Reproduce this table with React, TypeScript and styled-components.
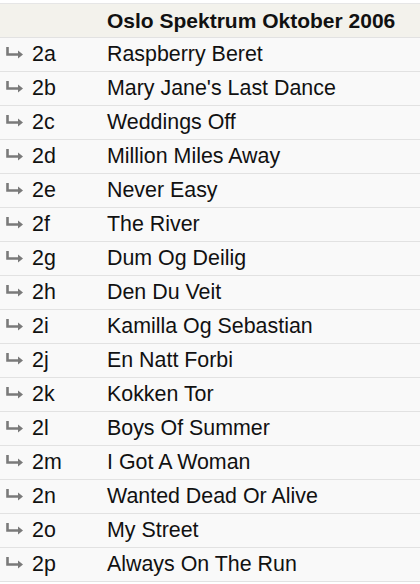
import { Fragment } from 'react';
import styled, { createGlobalStyle } from 'styled-components';

const GlobalStyle = createGlobalStyle`
  body {
    margin: 0;
    background: #ffffff;
    font-family: "Liberation Sans", Arial, sans-serif;
  }
`;

const Page = styled.div`
  padding-top: 3px;
`;

const SetTable = styled.div`
  display: grid;
  grid-template-columns: 107px 1fr;
  border-top: 1px solid #e6e6e6;
`;

const HeaderCell = styled.div`
  height: 33px;
  display: flex;
  align-items: center;
  background: #f3f2ec;
  border-bottom: 1px solid #e2e2e2;
  font-size: 21px;
  font-weight: bold;
  color: #111;
  white-space: nowrap;
`;

const Cell = styled.div`
  height: 33px;
  display: flex;
  align-items: center;
  background: #f9f9f9;
  border-bottom: 1px solid #e2e2e2;
  font-size: 21.4px;
  color: #111;
  white-space: nowrap;
`;

const NumCell = styled(Cell)`
  padding-left: 5px;
  gap: 9px;
`;

const Arrow = () => (
  <svg width="18" height="14" viewBox="0 0 18 14" style={{ marginTop: -6 }}>
    <path d="M2.5 2 V9.5 H13" stroke="#7a7a7a" strokeWidth="2.6" fill="none" />
    <path d="M13 5.5 L18 9.5 L13 13.5 Z" fill="#7a7a7a" />
  </svg>
);

const songs: [string, string][] = [
  ['2a', 'Raspberry Beret'],
  ['2b', "Mary Jane's Last Dance"],
  ['2c', 'Weddings Off'],
  ['2d', 'Million Miles Away'],
  ['2e', 'Never Easy'],
  ['2f', 'The River'],
  ['2g', 'Dum Og Deilig'],
  ['2h', 'Den Du Veit'],
  ['2i', 'Kamilla Og Sebastian'],
  ['2j', 'En Natt Forbi'],
  ['2k', 'Kokken Tor'],
  ['2l', 'Boys Of Summer'],
  ['2m', 'I Got A Woman'],
  ['2n', 'Wanted Dead Or Alive'],
  ['2o', 'My Street'],
  ['2p', 'Always On The Run'],
];

export default function App() {
  return (
    <Page>
      <GlobalStyle />
      <SetTable>
        <HeaderCell />
        <HeaderCell>Oslo Spektrum Oktober 2006</HeaderCell>
        {songs.map(([num, title]) => (
          <Fragment key={num}>
            <NumCell>
              <Arrow />
              {num}
            </NumCell>
            <Cell>{title}</Cell>
          </Fragment>
        ))}
      </SetTable>
    </Page>
  );
}
